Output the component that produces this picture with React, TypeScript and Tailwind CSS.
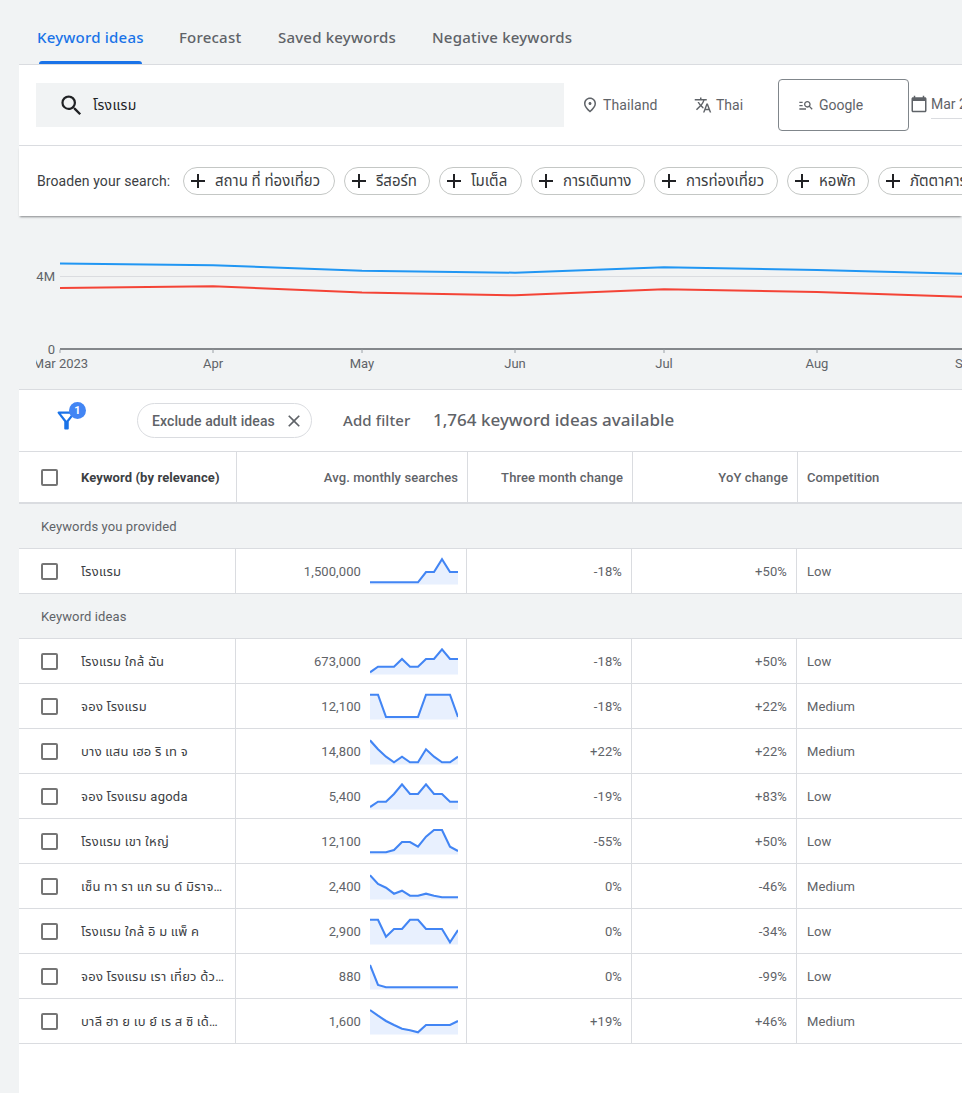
import React from "react";

const M = {
  search: "M15.5 14h-.79l-.28-.27A6.471 6.471 0 0 0 16 9.5 6.5 6.5 0 1 0 9.5 16c1.61 0 3.09-.59 4.23-1.57l.27.28v.79l5 4.99L20.49 19l-4.99-5zm-6 0C7.01 14 5 11.99 5 9.5S7.01 5 9.5 5 14 7.01 14 9.5 11.99 14 9.5 14z",
  place: "M12 12c-1.1 0-2-.9-2-2s.9-2 2-2 2 .9 2 2-.9 2-2 2zm6-1.8C18 6.57 15.35 4 12 4s-6 2.57-6 6.2c0 2.34 1.95 5.44 6 9.14 4.05-3.7 6-6.8 6-9.14zM12 2c4.2 0 8 3.22 8 8.2 0 3.32-2.67 7.25-8 11.8-5.33-4.55-8-8.48-8-11.8C4 5.22 7.8 2 12 2z",
  translate: "M12.87 15.07l-2.54-2.51.03-.03c1.74-1.94 2.98-4.17 3.71-6.53H17V4h-7V2H8v2H1v1.99h11.17C11.5 7.92 10.44 9.75 9 11.35 8.07 10.32 7.3 9.19 6.69 8h-2c.73 1.63 1.73 3.17 2.98 4.56l-5.09 5.02L4 19l5-5 3.11 3.11.76-2.04zM18.5 10h-2L12 22h2l1.12-3h4.75L21 22h2l-4.5-12zm-2.62 7l1.62-4.33L19.12 17h-3.24z",
  manage: "M7 9H2V7h5v2zm0 3H2v2h5v-2zm13.59 7l-3.83-3.83c-.8.52-1.74.83-2.76.83-2.76 0-5-2.24-5-5s2.24-5 5-5 5 2.24 5 5c0 1.02-.31 1.96-.83 2.75L22 17.59 20.59 19zM17 11c0-1.65-1.35-3-3-3s-3 1.35-3 3 1.35 3 3 3 3-1.35 3-3zM2 19h10v-2H2v2z",
  calendar: "M20 3h-1V1h-2v2H7V1H5v2H4c-1.1 0-2 .9-2 2v16c0 1.1.9 2 2 2h16c1.1 0 2-.9 2-2V5c0-1.1-.9-2-2-2zm0 18H4V8h16v13z",
  add: "M19 13h-6v6h-2v-6H5v-2h6V5h2v6h6v2z",
  close: "M19 6.41L17.59 5 12 10.59 6.41 5 5 6.41 10.59 12 5 17.59 6.41 19 12 13.41 17.59 19 19 17.59 13.41 12z",
  filter: "M7 6h10l-5.01 6.3L7 6zm-2.75-.39C6.27 8.2 10 13 10 13v6c0 .55.45 1 1 1h2c.55 0 1-.45 1-1v-6s3.72-4.8 5.74-7.39A.998.998 0 0 0 18.95 4H5.04c-.83 0-1.3.95-.79 1.61z",
};

function Icon({ d, className }: { d: string; className: string }) {
  return (
    <svg viewBox="0 0 24 24" className={className} fill="currentColor">
      <path d={d} />
    </svg>
  );
}

const chips = [
  { t: "สถาน ที่ ท่องเที่ยว", w: "w-[152px]" },
  { t: "รีสอร์ท", w: "w-[86px]" },
  { t: "โมเต็ล", w: "w-[83px]" },
  { t: "การเดินทาง", w: "w-[114px]" },
  { t: "การท่องเที่ยว", w: "w-[124px]" },
  { t: "หอพัก", w: "w-[82px]" },
  { t: "ภัตตาคาร", w: "w-[110px]" },
];

function Spark({ ys }: { ys: number[] }) {
  const pts = ys.map((y, i) => `${i * 8},${y}`).join(" ");
  return (
    <svg viewBox="0 0 88 45" className="w-[88px] h-[45px] shrink-0">
      <polygon points={`0,35.5 ${pts} 88,35.5`} fill="#e8f0fe" />
      <polyline points={pts} fill="none" stroke="#4285f4" strokeWidth="2.1" />
    </svg>
  );
}

type R = { k: string; n: string; s: number[]; q: string; y: string; c: string };

const first: R = {
  k: "โรงแรม",
  n: "1,500,000",
  s: [33.3, 33.3, 33.3, 33.3, 33.3, 33.3, 33.3, 23, 23, 10.3, 23, 23],
  q: "-18%",
  y: "+50%",
  c: "Low",
};

const rows: R[] = [
  { k: "โรงแรม ใกล้ ฉัน", n: "673,000", s: [33.3, 27.7, 27.7, 27.7, 20, 27.7, 27.7, 20, 20, 10.3, 20, 20], q: "-18%", y: "+50%", c: "Low" },
  { k: "จอง โรงแรม", n: "12,100", s: [10.7, 10.7, 33, 33, 33, 33, 33, 10.7, 10.7, 10.7, 10.7, 33], q: "-18%", y: "+22%", c: "Medium" },
  { k: "บาง แสน เฮอ ริ เท จ", n: "14,800", s: [11.3, 20.3, 27.7, 33.3, 27.7, 33.3, 33.3, 20.3, 27.7, 33.3, 33.3, 27.7], q: "+22%", y: "+22%", c: "Medium" },
  { k: "จอง โรงแรม agoda", n: "5,400", s: [33, 27.7, 27.7, 20, 10.3, 20, 20, 10.3, 20, 20, 27.7, 27.7], q: "-19%", y: "+83%", c: "Low" },
  { k: "โรงแรม เขา ใหญ่", n: "12,100", s: [33.3, 33.3, 33.3, 31, 23, 23, 27.7, 17.7, 11, 11, 27.7, 32], q: "-55%", y: "+50%", c: "Low" },
  { k: "เซ็น ทา รา แก รน ด์ มิราจ บีช", n: "2,400", s: [11.3, 20, 23.7, 29.7, 26.7, 31.7, 31.7, 29.7, 31.7, 33.3, 33.3, 33.3], q: "0%", y: "-46%", c: "Medium" },
  { k: "โรงแรม ใกล้ อิ ม แพ็ ค", n: "2,900", s: [10.7, 10.7, 27.7, 20, 20, 10.7, 10.7, 20, 20, 20, 33.3, 21], q: "0%", y: "-34%", c: "Low" },
  { k: "จอง โรงแรม เรา เที่ยว ด้วย กัน", n: "880", s: [11, 31, 33.3, 33.3, 33.3, 33.3, 33.3, 33.3, 33.3, 33.3, 33.3, 33.3], q: "0%", y: "-99%", c: "Low" },
  { k: "บาลี ฮา ย เบ ย์ เร ส ซิ เด้น ซ์", n: "1,600", s: [11, 16.7, 22, 26, 29.7, 31.3, 33.3, 26, 26, 26, 26, 22], q: "+19%", y: "+46%", c: "Medium" },
];

function Check() {
  return <div className="w-[17px] h-[17px] rounded-[2px] border-2 border-[#757575] shrink-0" />;
}

function Row({ r }: { r: R }) {
  return (
    <div className="flex h-[45px] bg-white border-b border-[#dadce0] text-[13px] tracking-[0.1px] text-[#5f6368]">
      <div className="w-[217px] flex items-center pl-[22px] border-r border-[#dadce0] shrink-0">
        <Check />
        <span className="ml-[23px] pt-[2px] w-[143px] truncate tracking-[0.25px] text-[#3c4043]">{r.k}</span>
      </div>
      <div className="w-[231px] flex items-start justify-end pr-[8px] border-r border-[#dadce0] shrink-0">
        <span className="mr-[9px] leading-[45px]">{r.n}</span>
        <Spark ys={r.s} />
      </div>
      <div className="w-[165px] flex items-center justify-end pt-[2px] pr-[9px] border-r border-[#dadce0] shrink-0">{r.q}</div>
      <div className="w-[165px] flex items-center justify-end pt-[2px] pr-[9px] border-r border-[#dadce0] shrink-0">{r.y}</div>
      <div className="flex items-center pt-[2px] pl-[10px]">{r.c}</div>
    </div>
  );
}

function Section({ t }: { t: string }) {
  return (
    <div className="h-[45px] flex items-center pt-[2px] pl-[22px] bg-[#f1f3f4] border-b border-[#dadce0] text-[13px] tracking-[0.1px] text-[#5f6368]">{t}</div>
  );
}

function Chart() {
  const blue = "60,263.5 213,265.2 362,270.8 515,272.7 664,267.3 817,270 962,273.8";
  const red = "60,288 213,286.2 362,292.6 515,295.3 664,289.2 817,292 962,296.7";
  const ticks = [60, 213, 362, 515, 664, 817];
  const labels: [number, string][] = [[60.5, "Mar 2023"], [213, "Apr"], [362, "May"], [515, "Jun"], [664, "Jul"], [817, "Aug"], [966, "Sep"]];
  return (
    <div className="h-[173px] pl-[17px] overflow-hidden">
      <svg viewBox="36 216 926 173" className="w-[926px] h-[173px] block" fontFamily="Roboto, sans-serif" fontSize="13" fill="#5f6368">
        <line x1="60" x2="962" y1="276.5" y2="276.5" stroke="#dadce0" />
        <polyline points={blue} fill="none" stroke="#2196f3" strokeWidth="2" strokeLinejoin="round" />
        <polyline points={red} fill="none" stroke="#f44336" strokeWidth="2" strokeLinejoin="round" />
        <line x1="60" x2="962" y1="349" y2="349" stroke="#5f6368" strokeWidth="1.5" />
        {ticks.map((x) => (
          <line key={x} x1={x} x2={x} y1="349.5" y2="353" stroke="#9aa0a6" />
        ))}
        <text x="55" y="281" textAnchor="end">4M</text>
        <text x="55" y="353.5" textAnchor="end">0</text>
        {labels.map(([x, t]) => (
          <text key={t} x={x} y="368" textAnchor="middle">{t}</text>
        ))}
      </svg>
    </div>
  );
}

export default function App() {
  return (
    <div className="w-[962px] h-[1093px] overflow-hidden bg-[#f1f3f4] pl-[19px] font-['Roboto','Noto_Sans','Noto_Sans_Thai',sans-serif]">
      {/* Tabs */}
      <div className="h-[65px] flex border-b border-[#dadce0] pl-[18px] text-[15px] tracking-[0.2px] font-['Noto_Sans',sans-serif] font-medium text-[#5f6368]">
        <div className="relative w-[142px] leading-[74px] text-[#1a73e8] whitespace-nowrap">
          Keyword ideas
          <div className="absolute left-[2px] bottom-0 w-[103px] h-[3px] rounded-t-[3px] bg-[#1a73e8]" />
        </div>
        <div className="w-[99px] leading-[74px]">Forecast</div>
        <div className="w-[154px] leading-[74px] whitespace-nowrap">Saved keywords</div>
        <div className="leading-[74px] whitespace-nowrap">Negative keywords</div>
      </div>

      {/* Search row */}
      <div className="h-[81px] bg-white border-b border-[#dadce0] flex items-center pl-[17px] text-[14px] text-[#5f6368] overflow-hidden">
        <div className="w-[528px] h-[44px] bg-[#f1f3f4] flex items-center pl-[22px] shrink-0">
          <Icon d={M.search} className="w-[27px] h-[27px] text-[#202124] shrink-0" />
          <span className="ml-[8px] tracking-[0.3px] text-[#202124]">โรงแรม</span>
        </div>
        <div className="w-[130px] flex items-center pl-[17px] shrink-0">
          <Icon d={M.place} className="w-[18px] h-[18px] shrink-0" />
          <span className="ml-[4px] tracking-[0.1px]">Thailand</span>
        </div>
        <div className="w-[84px] flex items-center shrink-0">
          <Icon d={M.translate} className="w-[18px] h-[18px] shrink-0" />
          <span className="ml-[4px]">Thai</span>
        </div>
        <div className="w-[131px] h-[52px] rounded-[4px] border border-[#80868b] flex items-center pl-[19px] shrink-0">
          <Icon d={M.manage} className="w-[16px] h-[16px] shrink-0" />
          <span className="ml-[5px]">Google</span>
        </div>
        <div className="flex items-center ml-[1px] shrink-0">
          <Icon d={M.calendar} className="w-[18px] h-[18px] shrink-0 -mt-[2px]" />
          <span className="ml-[3px] pt-[3px] pb-[4px] pr-[40px] leading-[20px] border-b border-[#dadce0] whitespace-nowrap">Mar 2023</span>
        </div>
      </div>

      {/* Broaden row */}
      <div className="relative h-[70px] bg-white flex items-center pl-[18px] text-[14px] text-[#3c4043] shadow-[0_2px_2px_-1px_rgba(60,64,67,0.6)] overflow-hidden">
        <span className="w-[146px] shrink-0 whitespace-nowrap tracking-[0.1px]">Broaden your search:</span>
        <div className="flex gap-[9px]">
          {chips.map((c) => (
            <div key={c.t} className={`${c.w} h-[28px] shrink-0 rounded-full border border-[#c4c7c5] flex items-center pl-[2px] whitespace-nowrap`}>
              <Icon d={M.add} className="w-[24px] h-[24px] text-[#202124] shrink-0" />
              <span className="ml-[5px] text-[15px]">{c.t}</span>
            </div>
          ))}
        </div>
      </div>

      <Chart />

      {/* Filter bar */}
      <div className="h-[63px] bg-white border-t border-b border-[#dadce0] flex items-center text-[#5f6368]">
        <div className="relative ml-[34px] w-[27px] h-[27px] shrink-0 -mt-[1px]">
          <Icon d={M.filter} className="w-[27px] h-[27px] text-[#1a73e8]" />
          <span className="absolute left-[16px] top-[-5px] w-[17px] h-[17px] rounded-full bg-[#4285f4] text-white text-[11px] font-bold leading-[17px] text-center">1</span>
        </div>
        <div className="ml-[57px] w-[175px] h-[35px] rounded-full border border-[#dadce0] flex items-center pl-[14px] shrink-0 text-[14px] font-medium">
          <span className="whitespace-nowrap tracking-[0.1px] pt-[2px]">Exclude adult ideas</span>
          <Icon d={M.close} className="w-[20px] h-[20px] ml-[9px] shrink-0" />
        </div>
        <span className="ml-[31px] w-[68px] text-[15px] tracking-[0.1px] font-['Noto_Sans',sans-serif] font-medium whitespace-nowrap">Add filter</span>
        <span className="ml-[22px] pb-[2px] text-[17px] font-['Noto_Sans',sans-serif] font-medium whitespace-nowrap">1,764 keyword ideas available</span>
      </div>

      {/* Table header */}
      <div className="flex h-[52px] bg-white border-b-2 border-[#dadce0] text-[13px] font-medium tracking-[0.1px] text-[#5f6368]">
        <div className="w-[218px] flex items-center pl-[22px] border-r border-[#dadce0] shrink-0">
          <Check />
          <span className="ml-[23px] pt-[2px] font-bold text-[#3c4043] text-[13px] whitespace-nowrap">Keyword (by relevance)</span>
        </div>
        <div className="w-[231px] flex items-center justify-end pt-[2px] pr-[9px] border-r border-[#dadce0] shrink-0">Avg. monthly searches</div>
        <div className="w-[165px] flex items-center justify-end pt-[2px] pr-[9px] border-r border-[#dadce0] shrink-0">Three month change</div>
        <div className="w-[165px] flex items-center justify-end pt-[2px] pr-[9px] border-r border-[#dadce0] shrink-0">YoY change</div>
        <div className="flex items-center pt-[2px] pl-[9px]">Competition</div>
      </div>

      <Section t="Keywords you provided" />
      <Row r={first} />
      <Section t="Keyword ideas" />
      {rows.map((r, i) => (
        <Row key={i} r={r} />
      ))}
      <div className="h-[60px] bg-white" />
    </div>
  );
}
